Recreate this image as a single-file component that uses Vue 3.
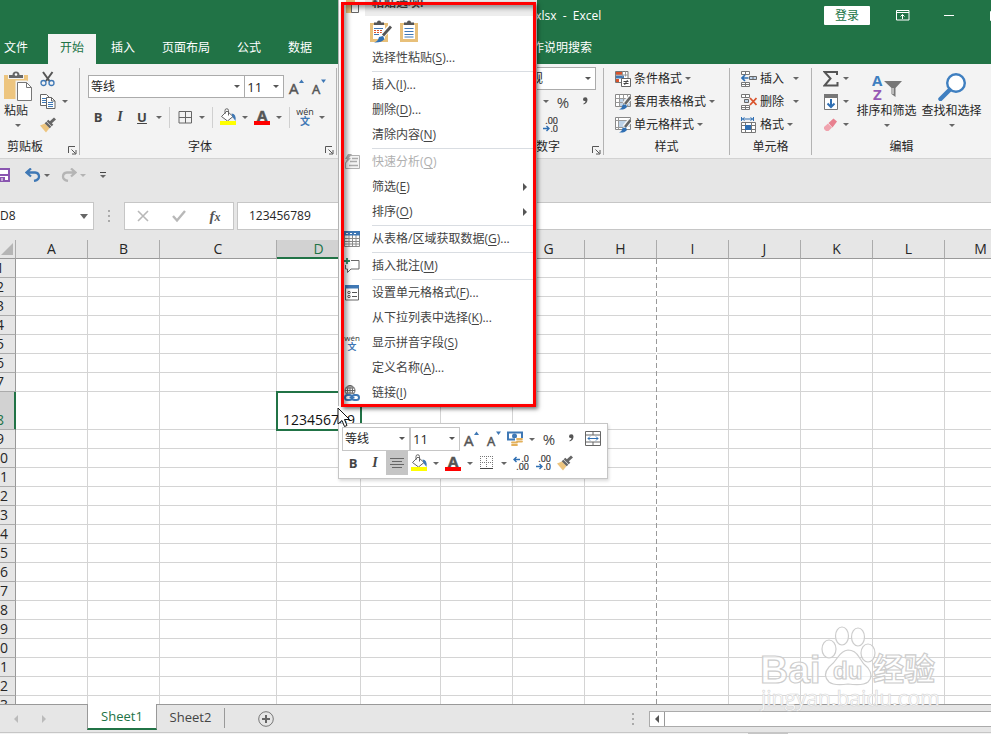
<script setup>
const tabs = ['插入', '页面布局', '公式', '数据']
const title = '.xlsx  -  Excel'
const columns = [
  { name: 'A', width: 72 }, { name: 'B', width: 72 }, { name: 'C', width: 117 },
  { name: 'D', width: 84 }, { name: 'E', width: 80 }, { name: 'F', width: 72 },
  { name: 'G', width: 72 }, { name: 'H', width: 72 }, { name: 'I', width: 72 },
  { name: 'J', width: 72 }, { name: 'K', width: 72 }, { name: 'L', width: 72 },
  { name: 'M', width: 72 }
]
const rows = Array.from({ length: 23 }, (_, i) => i + 1)
const menu = [
  { text: '选择性粘贴', key: 'S', dots: true, line: true },
  { text: '插入', key: 'I', dots: true },
  { text: '删除', key: 'D', dots: true },
  { text: '清除内容', key: 'N', line: true },
  { text: '快速分析', key: 'Q', icon: 'i-quick', disabled: true },
  { text: '筛选', key: 'E', sub: true },
  { text: '排序', key: 'O', sub: true, line: true },
  { text: '从表格/区域获取数据', key: 'G', dots: true, icon: 'i-table', line: true },
  { text: '插入批注', key: 'M', icon: 'i-note', line: true },
  { text: '设置单元格格式', key: 'F', dots: true, icon: 'i-format' },
  { text: '从下拉列表中选择', key: 'K', dots: true },
  { text: '显示拼音字段', key: 'S', icon: 'i-wen' },
  { text: '定义名称', key: 'A', dots: true },
  { text: '链接', key: 'I', icon: 'i-link' }
]
const styleTools = [
  { text: '条件格式', icon: 'i-cond' },
  { text: '套用表格格式', icon: 'i-tablestyle' },
  { text: '单元格样式', icon: 'i-cellstyle' }
]
const cellTools = [
  { text: '插入', icon: 'i-insert', wide: true },
  { text: '删除', icon: 'i-delete', wide: true },
  { text: '格式', icon: 'i-size' }
]
</script>

<template>
  <div class="app">
    <svg class="defs" aria-hidden="true">
      <symbol id="i-cut" viewBox="0 0 16 16">
        <path d="M3 1l6.500 9M12.500 1L6 10" stroke="#555" stroke-width="2" fill="none" />
        <circle cx="3.500" cy="12" r="2.500" fill="none" stroke="#3f78b5" stroke-width="1.300" />
        <circle cx="11.500" cy="12" r="2.500" fill="none" stroke="#3f78b5" stroke-width="1.300" />
      </symbol>
      <symbol id="i-copy" viewBox="0 0 16 16">
        <path d="M.5.5h6l3 3v8h-9z" fill="#fff" stroke="#666" />
        <path d="M2 4.500h4M2 6.500h4M2 8.500h4" stroke="#3f78b5" />
        <path d="M6.500 3.500h5l3.500 3.500v7.500h-8.500z" fill="#fff" stroke="#666" />
        <path d="M11.500 3.500v3.500h3.500" fill="none" stroke="#666" />
        <path d="M8 8.500h5M8 10.500h5M8 12.500h5" stroke="#3f78b5" />
      </symbol>
      <symbol id="i-brush" viewBox="0 0 16 16">
        <path d="M0 8.500l5-2 4.500 4.500-3.500 4.500z" fill="#edc57f" />
        <path d="M5.500 5.500l5 5M7.500 3.500l5 5" stroke="#666" stroke-width="2.400" />
        <path d="M10 6l5-4.500" stroke="#666" stroke-width="3" />
      </symbol>
      <symbol id="i-paste" viewBox="0 0 30 32">
        <path d="M1 4h24v24h-24z" fill="#edc57f" />
        <path d="M5 3h16v5h-16z" fill="#f3f3f3" />
        <path d="M6 7v-3h3.500a3.500 3.500 0 0 1 7 0h3.500v3z" fill="#666" />
        <circle cx="13" cy="3.500" r="1.300" fill="#fff" />
        <path d="M14 11h9.500l5.500 5.500v13h-15z" fill="#fff" stroke="#f3f3f3" stroke-width="3" />
        <path d="M14.500 11.500h9l5 5v13h-14z" fill="#fff" stroke="#777" />
        <path d="M23.500 11.500v5h5" fill="none" stroke="#777" />
      </symbol>
      <symbol id="i-up" viewBox="0 0 18 18">
        <text x="2" y="16" class="glyph-a">A</text>
        <path d="M12 5l2.500-3.500 2.500 3.500z" fill="#3f78b5" />
      </symbol>
      <symbol id="i-down" viewBox="0 0 18 18">
        <text x="3" y="16" class="glyph-a small">A</text>
        <path d="M12 1.500h5l-2.500 3.500z" fill="#3f78b5" />
      </symbol>
      <symbol id="i-border" viewBox="0 0 16 16">
        <path d="M2 2.500h12.500v11.500h-12.500zM8.500 2.500v11.500M2 8.500h12.500" fill="none" stroke="#666" />
      </symbol>
      <symbol id="i-dotted" viewBox="0 0 16 16">
        <path d="M1 1.500h13M1 7.500h13M1.500 1v13M7.500 1v13M13.500 1v13" fill="none" stroke="#777" stroke-dasharray="1 1" />
        <path d="M1 13.500h13" stroke="#444" />
      </symbol>
      <symbol id="i-fill" viewBox="0 0 18 18">
        <path d="M8 3l6 5.500-5.500 4.500-6-4.500z" fill="#fff" stroke="#666" />
        <path d="M6 6v-3.500a1.500 1.500 0 0 1 3.500 0v5" fill="none" stroke="#666" />
        <path d="M12.500 5.500q5 0 4 7.500l-3-4z" fill="#3f78b5" />
        <path d="M1 13h16v4h-16z" fill="#ff0" />
      </symbol>
      <symbol id="i-color" viewBox="0 0 18 18">
        <text x="4" y="13" class="glyph-a bold">A</text>
        <path d="M1 13h16v4h-16z" fill="#f00" />
      </symbol>
      <symbol id="i-wen" viewBox="0 0 18 18">
        <text x="9" y="7" class="wen">wén</text>
        <text x="9" y="17" class="han">文</text>
      </symbol>
      <symbol id="i-comma" viewBox="0 0 16 16">
        <path d="M6 5.500a2.200 2.200 0 1 1 4.500 0q0 4-4 5v-1q2-1 2-2.500q-2.500.3-2.500-1.500z" fill="#555" />
      </symbol>
      <symbol id="i-dec" viewBox="0 0 16 16">
        <text x="16" y="7" class="num">.00</text>
        <text x="16" y="15" class="num">.0</text>
        <path d="M1 11.500h6M4.500 9l2.500 2.500-2.500 2.500" fill="none" stroke="#2f6fb3" stroke-width="1.400" />
      </symbol>
      <symbol id="i-inc" viewBox="0 0 16 16">
        <text x="16" y="7" class="num">.0</text>
        <text x="16" y="15" class="num">.00</text>
        <path d="M1 4.500h6M3.500 2l-2.500 2.500 2.500 2.500" fill="none" stroke="#2f6fb3" stroke-width="1.400" />
      </symbol>
      <symbol id="i-cond" viewBox="0 0 16 16">
        <path d="M.5.5h12.500v11h-12.500z" fill="#fff" stroke="#777" />
        <path d="M1 1h6v3h-6zM1 8h3v3h-3z" fill="#d9532c" />
        <path d="M1 4.500h8v3h-8z" fill="#3f78b5" />
        <path d="M7.500.5v5M10.500.5v5M.5 4h12.500" stroke="#999" fill="none" />
        <path d="M6.500 7.500h9v8h-9z" fill="#fff" stroke="#666" />
        <path d="M8.500 10.500h5M8.500 12.500h5M12.500 9l-3 5" stroke="#444" />
      </symbol>
      <symbol id="i-tablestyle" viewBox="0 0 16 16">
        <path d="M.5.5h15v12h-15z" fill="#fff" stroke="#888" />
        <path d="M5 4h10v8h-10z" fill="#bdd2e8" />
        <path d="M.5 4.500h15M.5 8.500h15M4.500.5v12M8.500.5v12M12.500.5v12" stroke="#999" />
        <path d="M15.500 3l-6 7" stroke="#f3f3f3" stroke-width="5" />
        <path d="M15.500 3l-5.500 7" stroke="#666" stroke-width="2.600" />
        <path d="M4 15.500q3-1 3.500-4.500l3.500-.5 1 2.500q-2 3-8 2.500z" fill="#2f6fb3" />
      </symbol>
      <symbol id="i-cellstyle" viewBox="0 0 16 16">
        <path d="M.5.5h15v12h-15z" fill="#fff" stroke="#888" />
        <path d="M4 4h11v6h-11z" fill="#bdd2e8" />
        <path d="M.5 3.500h15M.5 10.500h8M3.500.5v12" stroke="#999" />
        <path d="M15.500 3l-6 7" stroke="#f3f3f3" stroke-width="5" />
        <path d="M15.500 3l-5.500 7" stroke="#666" stroke-width="2.600" />
        <path d="M4 15.500q3-1 3.500-4.500l3.500-.5 1 2.500q-2 3-8 2.500z" fill="#2f6fb3" />
      </symbol>
      <symbol id="i-insert" viewBox="0 0 16 16">
        <path d="M.5.5h8v3h-8zM4.500.5v3M.5 11.500h8v4h-8zM4.500 11.500v4M.5 13.500h8" fill="#fff" stroke="#777" />
        <path d="M8.500 5.500h7v3h-7zM12 5.500v3" fill="#bdd2e8" stroke="#666" />
        <path d="M7.500 7h-6M4 4l-3 3 3 3" fill="none" stroke="#2f6fb3" stroke-width="1.700" />
      </symbol>
      <symbol id="i-delete" viewBox="0 0 16 16">
        <path d="M.5.5h8v3h-8zM4.500.5v3M.5 11.500h8v4h-8zM4.500 11.500v4M.5 13.500h8" fill="#fff" stroke="#777" />
        <path d="M3.500 5.500h4v3h-4z" fill="#bdd2e8" stroke="#666" />
        <path d="M9 4l6.500 7M15.500 4l-6.500 7" stroke="#d9532c" stroke-width="1.800" />
      </symbol>
      <symbol id="i-size" viewBox="0 0 16 16">
        <path d="M.5 0v4M12.500 0v4M1 2h11M3.500.5l-2 1.500 2 1.500M9.500.5l2 1.500-2 1.500" fill="none" stroke="#2f6fb3" />
        <path d="M.5 5.500h14v10h-14zM4.500 5.500v10M10.500 5.500v10M.5 8.500h14M.5 12.500h14" fill="#fff" stroke="#777" />
        <path d="M4 8h6v5h-6z" fill="#2f6fb3" />
      </symbol>
      <symbol id="i-sum" viewBox="0 0 16 16">
        <path d="M14 4v-3h-12.500l6 6.500-6 7h13v-3.500" fill="none" stroke="#555" stroke-width="2" />
      </symbol>
      <symbol id="i-filldown" viewBox="0 0 16 16">
        <path d="M1.500.5h13v15h-13z" fill="#fff" stroke="#777" />
        <path d="M1 0h14v4h-14z" fill="#777" />
        <path d="M8 5v8M4.500 9.500l3.500 3.500 3.500-3.500" fill="none" stroke="#2f6fb3" stroke-width="2" />
      </symbol>
      <symbol id="i-eraser" viewBox="0 0 16 16">
        <path d="M1 10l4-3.500 4 4-3.500 3.500h-2.500l-2-2z" fill="#f0a3ae" />
        <path d="M5.500 6l5-4.500 3.500 3-4.500 6z" fill="#e8808f" />
      </symbol>
      <symbol id="i-sort" viewBox="0 0 30 28">
        <text x="0" y="13" class="sort-a">A</text>
        <text x="1" y="27" class="sort-z">Z</text>
        <path d="M12 8h18l-6.500 7v9l-4-3v-6z" fill="#777" />
        <path d="M21 15v6" stroke="#fff" />
      </symbol>
      <symbol id="i-find" viewBox="0 0 28 28">
        <circle cx="18" cy="10" r="8.800" fill="#fff" stroke="#3f7fc0" stroke-width="2.400" />
        <path d="M11.500 17l-9 9" stroke="#3f7fc0" stroke-width="4.500" stroke-linecap="round" />
      </symbol>
      <symbol id="i-launch" viewBox="0 0 9 9">
        <path d="M.5 7v-6.500h6.500M3.500 3.500l4 4M8 4v4h-4" fill="none" stroke="#555" />
      </symbol>
      <symbol id="i-undo" viewBox="0 0 16 14">
        <path d="M6 .5l-4.500 4 4.500 4M2 4.500h8q4 .5 4 4t-5 4.500" fill="none" stroke="currentColor" stroke-width="2.300" />
      </symbol>
      <symbol id="i-money" viewBox="0 0 18 18">
        <path d="M1 1.500h16v9h-16z" fill="#3f78b5" />
        <path d="M3 3.500h12v5h-12z" fill="#fff" />
        <circle cx="8.500" cy="6" r="2.500" fill="#3f78b5" />
        <path d="M9 8h8v4h-3v5h-10v-5h5z" fill="#fff" />
        <path d="M11 9h5M11 11.500h5M6 12.500h5M6 15h5" stroke="#e3b15c" stroke-width="1.800" stroke-linecap="round" />
      </symbol>
      <symbol id="i-merge" viewBox="0 0 16 16">
        <path d="M.5.5h15v14h-15zM.5 4h15M.5 11h15M8 .5v3.500M8 11v3.500" fill="#fff" stroke="#666" />
        <path d="M3 7.500h10M5 5.500l-2 2 2 2M11 5.500l2 2-2 2" fill="none" stroke="#2f6fb3" />
      </symbol>
      <symbol id="i-align" viewBox="0 0 16 16">
        <path d="M1 2.500h14M3 5.500h10M1 8.500h14M3 11.500h10" stroke="#666" />
      </symbol>
      <symbol id="i-quick" viewBox="0 0 16 16">
        <path d="M4 1.500h11.500v13h-14v-6" fill="#f4f4f4" stroke="#b0b0b0" />
        <path d="M8 4.500h6M6 7.500h7M5 11.500h9" stroke="#aaa" stroke-width="1.500" />
        <path d="M4 0h4l-3 4h2l-6 6 2-5h-2z" fill="#aaa" />
      </symbol>
      <symbol id="i-table" viewBox="0 0 16 16">
        <path d="M.5.5h15v15h-15zM.5 7.500h15M.5 10.500h15M.5 13h15M5 3v12.500M8.500 3v12.500M12 3v12.500" fill="#fff" stroke="#8a8a8a" />
        <path d="M0 0h16v4.500h-16z" fill="#3f78b5" />
        <path d="M2 2.500h2M6 2.500h2M10 2.500h2" stroke="#fff" />
      </symbol>
      <symbol id="i-note" viewBox="0 0 16 16">
        <path d="M7 2.500h8v8.500h-8l-3.500 3.500v-3.500h-2v-4" fill="none" stroke="#666" />
        <path d="M3 0v6M0 3h6" stroke="#2d8a63" stroke-width="1.800" />
      </symbol>
      <symbol id="i-format" viewBox="0 0 16 16">
        <path d="M1.500.5h13v14.500h-13z" fill="#fff" stroke="#666" />
        <path d="M1 0h14v3.500h-14z" fill="#3f78b5" />
        <path d="M8 7.500h5M8 11.500h5" stroke="#555" />
        <circle cx="5" cy="7.500" r="1.200" fill="none" stroke="#555" />
        <circle cx="5" cy="11.500" r="1.200" fill="none" stroke="#555" />
      </symbol>
      <symbol id="i-link" viewBox="0 0 16 16">
        <circle cx="6" cy="5.500" r="5" fill="#fff" stroke="#666" />
        <path d="M1 5.500h10M6 .5v10M2 3h8M2 8h8" stroke="#666" />
        <ellipse cx="6" cy="5.500" rx="2.500" ry="5" fill="none" stroke="#666" />
        <path d="M0 9h16v7h-16z" fill="#fff" />
        <rect x="1" y="10" width="7" height="5" rx="2.500" fill="none" stroke="#3f78b5" stroke-width="2" />
        <rect x="8" y="10" width="7" height="5" rx="2.500" fill="none" stroke="#3f78b5" stroke-width="2" />
        <path d="M5.500 12.500h5" stroke="#3f78b5" stroke-width="1.800" />
      </symbol>
      <symbol id="i-clip" viewBox="0 0 20 22">
        <path d="M0 3h18v19h-18z" fill="#e8c07a" />
        <path d="M3 5h12v14h-12z" fill="#fff" />
        <path d="M4 5v-2.500h3a2 2 0 0 1 4 0h3v2.500z" fill="#555" />
        <path d="M4.500 8.500h9M4.500 11.500h9M4.500 14.500h9M4.500 17h9" stroke="#3f78b5" />
      </symbol>
      <symbol id="i-clipbrush" viewBox="0 0 22 23">
        <path d="M0 3h18v19h-18z" fill="#e8c07a" />
        <path d="M3 5h12v14h-12z" fill="#fff" />
        <path d="M4 5v-2.500h3a2 2 0 0 1 4 0h3v2.500z" fill="#555" />
        <path d="M4 8.500h9M4 14.500h5" stroke="#3f78b5" />
        <path d="M4 10.500h9M4 12.500h9" stroke="#d9532c" stroke-dasharray="2 1" />
        <path d="M21 6l-8 9" stroke="#fff" stroke-width="5" />
        <path d="M21 6.500l-8 9" stroke="#555" stroke-width="2.800" />
        <path d="M4 22.500q4-1 5-5.500l4-1 1.500 3q-3 4-10.500 3.500z" fill="#2f6fb3" />
      </symbol>
    </svg>

    <header class="top">
      <div class="titlebar">
        <span class="doc">{{ title }}</span>
        <button class="login">登录</button>
        <button class="win" aria-label="功能区显示选项">
          <svg width="14" height="11"><path d="M.5.5h12.500v9.500h-12.500zM.5 2.500h12.500M6.500 9v-4.500M4.500 6.500l2-2 2 2" fill="none" stroke="#fff" /></svg>
        </button>
        <button class="win" aria-label="最小化"><svg width="10" height="2"><path d="M0 .5h10" stroke="#fff" /></svg></button>
        <button class="win last" aria-label="最大化"><svg width="10" height="10"><path d="M.5.5h9v9h-9z" fill="none" stroke="#fff" /></svg></button>
      </div>
      <nav class="tabs">
        <button class="tab file">文件</button>
        <button class="tab active">开始</button>
        <button v-for="t in tabs" :key="t" class="tab">{{ t }}</button>
        <button class="tab tell">操作说明搜索</button>
      </nav>
    </header>

    <section class="ribbon">
      <div class="group clipboard">
        <div class="body clip-body">
          <button class="big paste">
            <svg width="30" height="32"><use href="#i-paste" /></svg>
            <span>粘贴</span><i class="arrow"></i>
          </button>
          <div class="stack">
            <button class="line" aria-label="剪切"><svg width="16" height="16"><use href="#i-cut" /></svg></button>
            <button class="line" aria-label="复制"><svg width="16" height="16"><use href="#i-copy" /></svg><i class="arrow far"></i></button>
            <button class="line" aria-label="格式刷"><svg width="16" height="16"><use href="#i-brush" /></svg></button>
          </div>
        </div>
        <div class="foot"><span>剪贴板</span><svg class="launch" width="9" height="9"><use href="#i-launch" /></svg></div>
      </div>

      <div class="group font">
        <div class="body">
          <div class="row combos">
            <label class="combo name"><select aria-label="字体"><option>等线</option></select></label>
            <label class="combo size"><select aria-label="字号"><option>11</option></select></label>
            <button class="ib" aria-label="增大字号"><svg width="18" height="18"><use href="#i-up" /></svg></button>
            <button class="ib" aria-label="减小字号"><svg width="18" height="18"><use href="#i-down" /></svg></button>
          </div>
          <div class="row">
            <button class="ib b">B</button>
            <button class="ib i">I</button>
            <button class="ib u">U</button>
            <button class="ar" aria-label="下划线选项"><i class="arrow"></i></button>
            <i class="sep"></i>
            <button class="ib" aria-label="边框"><svg width="16" height="16"><use href="#i-border" /></svg></button>
            <button class="ar" aria-label="边框选项"><i class="arrow"></i></button>
            <i class="sep"></i>
            <button class="ib" aria-label="填充颜色"><svg width="18" height="18"><use href="#i-fill" /></svg></button>
            <button class="ar" aria-label="填充颜色选项"><i class="arrow"></i></button>
            <button class="ib" aria-label="字体颜色"><svg width="18" height="18"><use href="#i-color" /></svg></button>
            <button class="ar" aria-label="字体颜色选项"><i class="arrow"></i></button>
            <i class="sep"></i>
            <button class="ib" aria-label="拼音"><svg width="18" height="18"><use href="#i-wen" /></svg></button>
            <button class="ar" aria-label="拼音选项"><i class="arrow"></i></button>
          </div>
        </div>
        <div class="foot"><span>字体</span><svg class="launch" width="9" height="9"><use href="#i-launch" /></svg></div>
      </div>

      <div class="group number">
        <div class="body">
          <label class="combo fmt"><select aria-label="数字格式"><option>常规</option></select></label>
          <div class="row">
            <button class="ar" aria-label="会计格式"><i class="arrow"></i></button>
            <button class="ib pct">%</button>
            <button class="ib" aria-label="千位分隔"><svg width="16" height="16"><use href="#i-comma" /></svg></button>
          </div>
          <div class="row dec">
            <button class="ib" aria-label="减少小数位数"><svg width="16" height="16"><use href="#i-dec" /></svg></button>
          </div>
        </div>
        <div class="foot"><span>数字</span><svg class="launch" width="9" height="9"><use href="#i-launch" /></svg></div>
      </div>

      <div class="group styles">
        <div class="body">
          <button v-for="t in styleTools" :key="t.text" class="line"><svg width="16" height="16"><use :href="'#' + t.icon" /></svg><span>{{ t.text }}</span><i class="arrow"></i></button>
        </div>
        <div class="foot"><span>样式</span></div>
      </div>

      <div class="group cells">
        <div class="body">
          <button v-for="t in cellTools" :key="t.text" class="line"><svg width="16" height="16"><use :href="'#' + t.icon" /></svg><span>{{ t.text }}</span><i class="arrow" :class="{ far: t.wide }"></i></button>
        </div>
        <div class="foot"><span>单元格</span></div>
      </div>

      <div class="group edit">
        <div class="body clip-body">
          <div class="stack">
            <button class="line" aria-label="求和"><svg width="16" height="16"><use href="#i-sum" /></svg><i class="arrow"></i></button>
            <button class="line" aria-label="填充"><svg width="16" height="16"><use href="#i-filldown" /></svg><i class="arrow"></i></button>
            <button class="line" aria-label="清除"><svg width="16" height="16"><use href="#i-eraser" /></svg><i class="arrow"></i></button>
          </div>
          <button class="big wide"><svg width="30" height="32" viewBox="0 -2 30 32"><use href="#i-sort" width="30" height="28" /></svg><span>排序和筛选</span><i class="arrow"></i></button>
          <button class="big wide"><svg width="28" height="32" viewBox="0 -2 28 32"><use href="#i-find" width="28" height="28" /></svg><span>查找和选择</span><i class="arrow"></i></button>
        </div>
        <div class="foot"><span>编辑</span></div>
      </div>
    </section>

    <section class="qat">
      <button class="save" aria-label="保存"><svg width="10" height="14"><path d="M-4 1h13v12h-13z" fill="#fff" stroke="#8a56b0" stroke-width="2" /><path d="M0 7h9" stroke="#8a56b0" stroke-width="2" /><path d="M0 9h5v4h-5z" fill="#8a56b0" /><path d="M2 10v3" stroke="#fff" /></svg></button>
      <button class="undo" aria-label="撤消"><svg width="16" height="14"><use href="#i-undo" /></svg></button>
      <button class="ar" aria-label="撤消列表"><i class="arrow"></i></button>
      <button class="redo" aria-label="恢复"><svg width="16" height="14"><use href="#i-undo" transform="translate(16 0) scale(-1 1)" /></svg></button>
      <button class="ar faded" aria-label="恢复列表"><i class="arrow"></i></button>
      <button class="more" aria-label="自定义快速访问工具栏"><i class="bar"></i><i class="arrow"></i></button>
    </section>

    <section class="formula">
      <div class="namebox"><input value="D8" aria-label="名称框" /><i class="arrow big-arrow"></i></div>
      <i class="grip"></i>
      <div class="fx">
        <button aria-label="取消"><svg width="12" height="12"><path d="M1 1l10 10M11 1l-10 10" stroke="#b8b8b8" stroke-width="1.600" /></svg></button>
        <button aria-label="输入"><svg width="14" height="12"><path d="M1 6l4 4.500 8-9.500" fill="none" stroke="#b8b8b8" stroke-width="2.400" /></svg></button>
        <button class="fn">f<small>x</small></button>
      </div>
      <input class="bar-input" value="123456789" aria-label="编辑栏" />
    </section>

    <main class="sheet">
      <table>
        <colgroup>
          <col class="rowhead" />
          <col v-for="c in columns" :key="c.name" :style="{ width: c.width + 'px' }" />
        </colgroup>
        <thead>
          <tr>
            <th class="corner"><svg width="12" height="12"><path d="M12 0v12h-12z" fill="#b5b5b5" /></svg></th>
            <th v-for="c in columns" :key="c.name" scope="col" :class="{ sel: c.name === 'D' }">{{ c.name }}</th>
          </tr>
        </thead>
        <tbody>
          <tr v-for="r in rows" :key="r" :class="{ tall: r === 8 }">
            <th scope="row" :class="{ sel: r === 8 }">{{ r }}</th>
            <td v-for="c in columns" :key="c.name" :class="{ picked: r === 8 && c.name === 'D' }">{{ r === 8 && c.name === 'D' ? '123456789' : '' }}</td>
          </tr>
        </tbody>
      </table>
      <i class="pagebreak"></i>
    </main>

    <footer class="bottom">
      <div class="arrows"><i class="tri left"></i><i class="tri right"></i></div>
      <button class="sheet-tab on">Sheet1</button>
      <button class="sheet-tab">Sheet2</button>
      <button class="add" aria-label="新工作表"><svg width="16" height="16"><circle cx="8" cy="8" r="7.300" fill="none" stroke="#777" /><path d="M8 4v8M4 8h8" stroke="#666" stroke-width="2" /></svg></button>
      <i class="grip low"></i>
      <div class="scroll"><button aria-label="向左滚动"><i class="tri left dark"></i></button></div>
    </footer>
    <div class="status"><i></i></div>

    <svg class="watermark" width="184" height="90" viewBox="0 0 184 90">
      <g fill="#fff" fill-opacity="0.650" stroke="#cdcdcd" stroke-width="1.200">
        <text x="3" y="61" class="wm-big">Bai</text>
        <ellipse cx="72" cy="27" rx="7" ry="9" />
        <ellipse cx="85" cy="14" rx="6.500" ry="9" />
        <ellipse cx="101" cy="15" rx="6.500" ry="9" />
        <ellipse cx="111" cy="31" rx="7" ry="9" />
        <path d="M91 28q7 0 11 7t9 11q6 8 0 14q-5 4-20 2q-14 2-19-2q-7-7 0-15q5-4 9-10t10-7z" />
        <text x="76" y="57" class="wm-du">du</text>
        <text x="116" y="58" class="wm-cn">经验</text>
      </g>
      <text x="4" y="84" class="wm-url">jingyan.baidu.com</text>
    </svg>

    <div class="mini" role="toolbar">
      <div class="row">
        <label class="combo mname"><select aria-label="浮动字体"><option>等线</option></select></label>
        <label class="combo msize"><select aria-label="浮动字号"><option>11</option></select></label>
        <button class="ib" aria-label="增大"><svg width="18" height="18"><use href="#i-up" /></svg></button>
        <button class="ib" aria-label="减小"><svg width="18" height="18"><use href="#i-down" /></svg></button>
        <button class="ib" aria-label="会计数字格式"><svg width="18" height="18"><use href="#i-money" /></svg></button>
        <button class="ar" aria-label="会计选项"><i class="arrow"></i></button>
        <button class="ib pct">%</button>
        <button class="ib" aria-label="千位"><svg width="16" height="16"><use href="#i-comma" /></svg></button>
        <button class="ib" aria-label="合并"><svg width="16" height="16"><use href="#i-merge" /></svg></button>
      </div>
      <div class="row">
        <button class="ib b">B</button>
        <button class="ib i">I</button>
        <button class="ib pressed" aria-label="居中"><svg width="16" height="14"><use href="#i-align" width="16" height="16" /></svg></button>
        <button class="ib" aria-label="填充"><svg width="18" height="18"><use href="#i-fill" /></svg></button>
        <button class="ar" aria-label="填充选项"><i class="arrow"></i></button>
        <button class="ib" aria-label="颜色"><svg width="18" height="18"><use href="#i-color" /></svg></button>
        <button class="ar" aria-label="颜色选项"><i class="arrow"></i></button>
        <button class="ib" aria-label="边框线"><svg width="16" height="16"><use href="#i-dotted" /></svg></button>
        <button class="ar" aria-label="边框线选项"><i class="arrow"></i></button>
        <button class="ib" aria-label="增加小数"><svg width="16" height="16"><use href="#i-inc" /></svg></button>
        <button class="ib" aria-label="减少小数"><svg width="16" height="16"><use href="#i-dec" /></svg></button>
        <button class="ib" aria-label="刷子"><svg width="16" height="16"><use href="#i-brush" /></svg></button>
      </div>
    </div>

    <div class="menu" role="menu">
      <div class="menu-head"><span class="mi"><svg width="16" height="20"><path d="M2 0h9v19h-9z" fill="#e8c07a" /><path d="M7.500 8.500h7v10h-7z" fill="#fff" stroke="#666" /></svg></span><b>粘贴选项:</b></div>
      <div class="paste-opts">
        <button aria-label="保留源格式"><svg width="22" height="23"><use href="#i-clipbrush" /></svg></button>
        <button aria-label="只保留文本"><svg width="20" height="22"><use href="#i-clip" /></svg></button>
      </div>
      <template v-for="m in menu" :key="m.text">
        <button class="item" role="menuitem" :disabled="m.disabled">
          <span class="mi"><svg v-if="m.icon" width="16" height="16"><use :href="'#' + m.icon" /></svg></span>
          <span class="mt">{{ m.text }}(<u>{{ m.key }}</u>){{ m.dots ? '...' : '' }}</span>
          <i v-if="m.sub" class="tri right dark"></i>
        </button>
        <hr v-if="m.line" />
      </template>
    </div>
    <div class="frame"></div>
    <svg class="cursor" width="14" height="21"><path d="M1 1v16l4-3.500 2.500 6 2.500-1-2.500-6h5z" fill="#fff" stroke="#111" /></svg>
  </div>
</template>

<style>
body { margin: 0; overflow: hidden; }
</style>

<style scoped>
.app { position: relative; display: flex; flex-direction: column; height: 100vh; overflow: hidden; background: #e6e6e6; color: #262626; font: 12px/16px "Open Sans", "Noto Sans CJK SC", sans-serif; }
.app *, .app *::after { box-sizing: border-box; }
.defs { display: none; }
button, input, select { font: inherit; color: inherit; border: 0; padding: 0; margin: 0; background: none; }
button { display: flex; align-items: center; justify-content: center; white-space: nowrap; }
svg { display: block; flex: none; overflow: visible; }
.glyph-a { font: 500 15px "Open Sans", sans-serif; fill: #555; stroke: #555; stroke-width: 0.5px; }
.glyph-a.small { font-size: 13px; }
.glyph-a.bold { font-weight: 700; }
.wen { font: 9px "Open Sans", sans-serif; text-anchor: middle; fill: #333; }
.han { font: 700 10px "Noto Sans CJK SC", sans-serif; text-anchor: middle; fill: #3f78b5; }
.num { font: 9px "Open Sans", sans-serif; text-anchor: end; fill: #333; stroke: #333; stroke-width: 0.2px; }
.sort-a { font: 700 15px "Open Sans", sans-serif; fill: #3f7fc0; }
.sort-z { font: 700 15px "Open Sans", sans-serif; fill: #9659b5; }
.arrow { flex: none; width: 0; height: 0; border: 3px solid transparent; border-top-color: #666; border-bottom: 0; }

.top { background: #217346; color: #fff; }
.titlebar { display: flex; align-items: center; height: 34px; padding-bottom: 3px; }
.doc { margin: 0 auto 0 532px; white-space: pre; }
.login { width: 46px; height: 19px; margin-right: 23px; background: #fff; color: #217346; border-radius: 1px; }
.win { width: 20px; height: 20px; margin-right: 26px; }
.win.last { width: 2px; margin: 0 -1px 0 5px; justify-content: flex-start; overflow: hidden; }
.tabs { display: flex; gap: 3px; height: 30px; }
.tab { padding: 0 12px 3px; }
.tab.file { padding-left: 4px; margin-right: 5px; }
.tab.active { background: #f3f3f3; color: #217346; }
.tab.tell { margin-left: 181px; }

.ribbon { display: flex; height: 95px; padding: 4px 0 3px; background: #f3f3f3; border-bottom: 1px solid #d2d2d2; }
.group { flex: none; display: flex; flex-direction: column; border-right: 1px solid #b3b3b3; }
.group.clipboard { width: 80px; }
.group.font { width: 257px; }
.group.number { width: 267px; }
.group.styles { width: 126px; }
.group.cells { width: 82px; }
.group.edit { flex: 1; border: 0; }
.body { flex: 1; padding: 0 7px; }
.clip-body { display: flex; }
.foot { display: flex; justify-content: center; align-items: flex-end; height: 16px; }
.foot span { flex: 1; text-align: center; }
.launch { margin: 0 2px 0 -11px; }
.clipboard .foot span { padding-right: 29px; }
.font .foot span { padding-right: 16px; }
.number .foot span { text-align: right; padding-right: 43px; }
.big { flex-direction: column; height: 70px; padding-top: 3px; justify-content: flex-start; }
.big span { margin: 0 0 5px; }
.big .arrow { margin-top: 0; }
.clipboard .body { padding: 0 0 0 3px; }
.paste { width: 29px; margin-right: 8px; }
.paste span { margin-right: 3px; }
.big.wide { width: 65px; }
.line { height: 23px; gap: 3px; justify-content: flex-start; width: 100%; padding-bottom: 2px; }
.clipboard .line .far { margin-left: 3px; }
.cells .line .far { margin-left: 6px; }
.edit .line { gap: 4px; }
.styles .body, .cells .body { padding-left: 11px; }
.edit .body { padding: 0 0 0 11px; }
.edit .stack { width: 31px; }
.font .body { padding-top: 7px; }
.row { display: flex; align-items: center; height: 24px; }
.font .row { height: 38px; }
.font .row.combos { height: 23px; padding-left: 1px; }
.combo { position: relative; display: block; height: 23px; border: 1px solid #ababab; background: #fff; }
.combo::after { content: ""; position: absolute; right: 4px; top: 9px; border: 3px solid transparent; border-top-color: #555; border-bottom: 0; }
.combo select { display: block; width: 100%; height: 21px; padding-left: 2px; appearance: none; outline: 0; }
.combo.name { width: 158px; }
.combo.size { width: 40px; margin: 0 1px 0 -1px; }
.combo.size select, .msize select { font-size: 13px; }
.combo.fmt { width: 80px; margin-left: auto; }
.combo.fmt select { padding-left: 2px; }
.number .row { justify-content: flex-end; height: 23px; }
.number .body { margin-top: -1px; }
.number .row.dec { padding-right: 35px; }
.ib { flex: none; width: 22px; height: 23px; color: #444; }
.ar { flex: none; width: 12px; height: 23px; }
.sep { width: 1px; height: 21px; margin: 0 4px; background: #d0d0d0; }
.b { font: 700 13px "Open Sans", sans-serif; }
.i { font: italic 700 14px "Liberation Serif", serif; }
.u { font: 700 13px "Open Sans", sans-serif; text-decoration: underline; }
.pct { font: 500 15px "Open Sans", sans-serif; color: #444; }

.qat { display: flex; align-items: center; height: 33px; padding-bottom: 1px; }
.save { width: 10px; margin-right: 15px; }
.undo { color: #3f78b5; }
.redo { color: #b5b5b5; margin-left: 8px; }
.faded { opacity: 0.400; }
.more { flex-direction: column; gap: 2px; margin-left: 11px; }
.bar { width: 6px; height: 1px; background: #444; }

.formula { display: flex; height: 48px; padding: 10px 0; }
.namebox { display: flex; align-items: center; width: 94px; border: 1px solid #c6c6c6; border-left: 0; background: #fff; padding-right: 5px; }
.namebox input { flex: 1; min-width: 0; outline: 0; }
.big-arrow { border-width: 4px; border-bottom: 0; border-top-width: 5px; }
.grip { width: 2px; height: 12px; margin: 8px 14px 0 14px; background: repeating-linear-gradient(#aaa 0 2px, transparent 2px 5px); }
.fx { display: flex; align-items: center; width: 110px; margin-right: 3px; border: 1px solid #c6c6c6; background: #fff; }
.fx button { flex: 1; }
.fn { font: italic 700 15px "Liberation Serif", serif; color: #555; }
.fn small { font-size: 12px; padding-top: 3px; }
.bar-input { flex: 1; min-width: 0; padding-left: 11px; border: 1px solid #c6c6c6; border-right: 0; background: #fff; outline: 0; }

.sheet { position: relative; flex: 1; min-height: 0; overflow: hidden; background: #fff; }
table { width: max-content; margin-left: -15px; table-layout: fixed; border-collapse: separate; border-spacing: 0; font-size: 14px; line-height: 18px; }
.rowhead { width: 31px; }
th { padding: 0; height: 19px; font-weight: 400; background: #e6e6e6; border-right: 1px solid #ababab; border-bottom: 1px solid #ababab; }
thead th { border-bottom-color: #999; }
tbody th { border-right-color: #999; }
.corner svg { margin-left: 16px; }
td { padding: 0 5px 0 0; border-right: 1px solid #d4d4d4; border-bottom: 1px solid #d4d4d4; text-align: right; vertical-align: bottom; }
.tall th, .tall td { height: 38px; vertical-align: bottom; }
th.sel { background: #d2d2d2; color: #217346; }
thead th.sel { box-shadow: inset 0 -1px #217346; border-bottom-color: #217346; }
tbody th.sel { box-shadow: inset -1px 0 #217346; border-right-color: #217346; }
.picked { outline: 2px solid #217346; outline-offset: -1px; color: #111; }
.pagebreak { position: absolute; left: 656px; top: 19px; bottom: 0; width: 1px; background: repeating-linear-gradient(#999 0 5px, #fff 5px 8px); }

.bottom { display: flex; height: 29px; border-top: 1px solid #999; border-bottom: 1px solid #c6c6c6; }
.arrows { display: flex; align-items: center; gap: 24px; width: 87px; padding-left: 14px; }
.tri { width: 0; height: 0; border: 4px solid transparent; }
.tri.left { border-left: 0; border-right-color: #bbb; }
.tri.right { border-right: 0; border-left-color: #bbb; }
.tri.left.dark { border-right-color: #555; }
.tri.right.dark { border-left-color: #555; }
.sheet-tab { height: 25px; padding: 0 12px 2px; font-size: 13px; color: #444; border-right: 1px solid #999; }
.sheet-tab:not(.on) { width: 68px; height: 20px; margin-top: 3px; padding-bottom: 3px; }
.sheet-tab.on { width: 70px; margin-top: -1px; height: 26px; padding-bottom: 0; background: #fff; color: #217346; border-bottom: 2px solid #217346; border-left: 1px solid #999; }
.add { margin-left: 33px; }
.grip.low { margin: 8px 15px 0 auto; }
.scroll { flex: 0 0 34.500%; height: 16px; margin-top: 6px; border: 1px solid #ababab; border-right: 0; background: #fff; }
.scroll button { width: 15px; height: 14px; border-right: 1px solid #999; }
.status { height: 1px; background: #f3f3f3; }
.status i { display: block; width: 40px; height: 1px; margin-left: 748px; background: #c6c6c6; }

.watermark { position: absolute; left: 757px; top: 622px; }
.wm-big { font: 700 39px "Liberation Sans", sans-serif; }
.wm-du { font: 700 24px "Liberation Sans", sans-serif; }
.wm-cn { font: 700 31px "Noto Sans CJK SC", sans-serif; }
.wm-url { font: 21px "Open Sans", sans-serif; fill: #fff; stroke: #d4d4d4; stroke-width: 0.6px; }

.mini { position: absolute; left: 338px; top: 423px; padding: 3px; border: 1px solid #c6c6c6; background: #fff; box-shadow: 1px 2px 3px rgba(0, 0, 0, 0.15); }
.mini .combo { border-color: #c6c6c6; height: 24px; }
.mini .combo select { height: 22px; }
.mini .mname { width: 68px; }
.mini .msize { width: 50px; }
.pressed { height: 24px; background: #c5c5c5; }

.menu { position: absolute; left: 338px; top: -9px; width: 199px; border-left: 1px solid #b5b5b5; background: #fff; color: #444; }
.menu-head { display: flex; height: 25px; }
.mi { flex: none; display: flex; align-items: center; justify-content: center; width: 26px; }
.menu-head b { flex: 1; padding: 4px 0 0 7px; background: #ededed; }
.paste-opts { display: flex; align-items: center; gap: 8px; height: 30px; padding-left: 31px; }
.item { width: 100%; height: 25px; justify-content: flex-start; padding-bottom: 1px; }
.mt { flex: 1; text-align: left; padding-left: 7px; }
.item:disabled { color: #b0b0b0; }
.item .tri { margin-right: 10px; }
hr { height: 1px; margin: 0 4px 1px 33px; border: 0; background: #d9dde2; }
u { text-underline-offset: 2px; }
.frame { position: absolute; left: 341px; top: 2px; width: 195px; height: 405px; border: 3px solid #f00; box-shadow: 2px 2px 4px rgba(0, 0, 0, 0.55), inset 3px 3px 5px rgba(0, 0, 0, 0.4); pointer-events: none; }
.cursor { position: absolute; left: 337px; top: 407px; }
</style>
